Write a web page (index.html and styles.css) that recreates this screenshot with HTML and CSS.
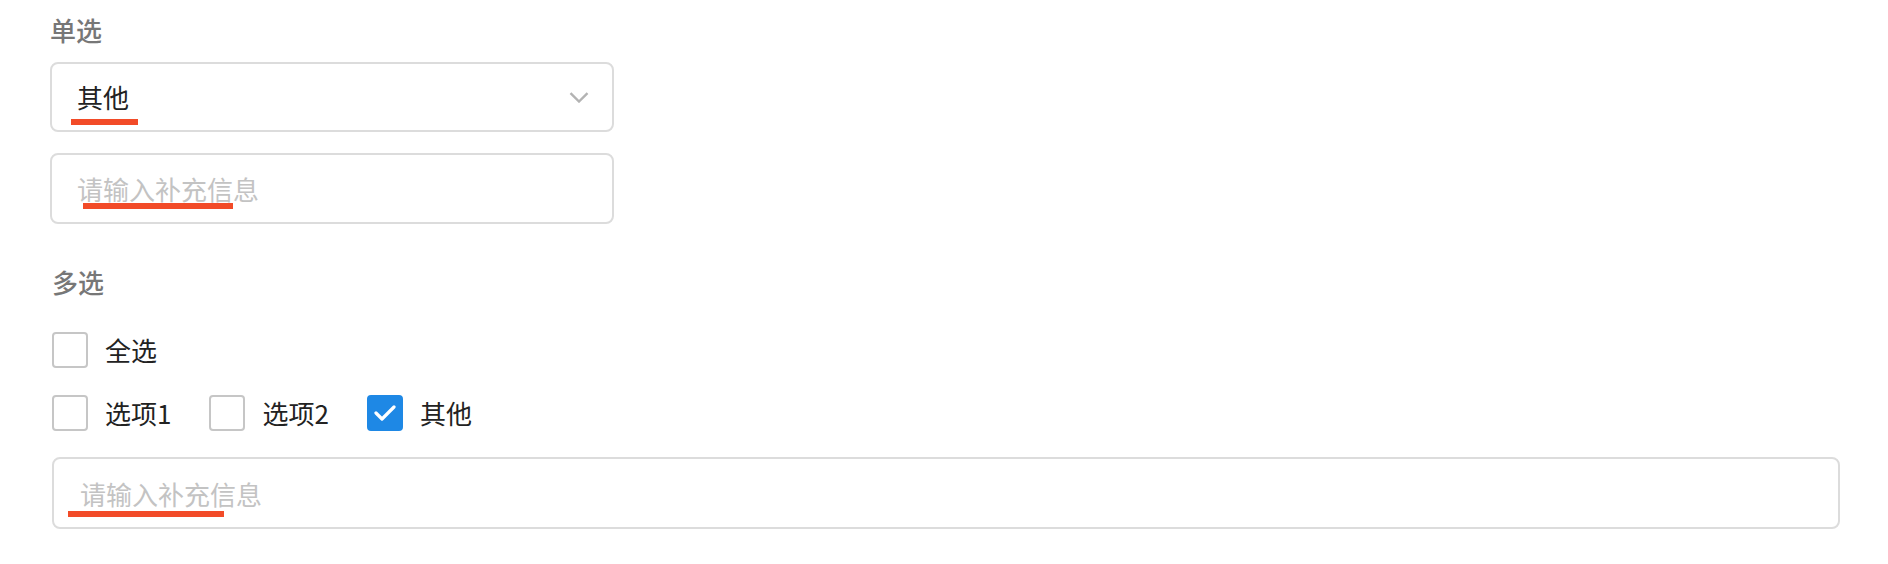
FILE: index.html
```html
<!DOCTYPE html>
<html lang="zh-CN">
<head>
  <meta charset="UTF-8">
  <title>单选 / 多选</title>
  <link rel="stylesheet" href="styles.css">
</head>
<body>
  <div class="page">
    <div class="section single">
      <div class="label">单选</div>
      <div class="field select">
        <span class="value">其他</span>
        <svg class="chevron" width="20" height="11" viewBox="0 0 20 11">
          <path d="M1.5 1.2 L10 9.5 L18.5 1.2" fill="none" stroke="#b3b3b3" stroke-width="2.4"/>
        </svg>
        <i class="mark mark-a"></i>
      </div>
      <div class="field">
        <input type="text" placeholder="请输入补充信息">
        <i class="mark mark-b"></i>
      </div>
    </div>

    <div class="section multi">
      <div class="label">多选</div>
      <div class="row">
        <label class="check"><span class="box"></span>全选</label>
      </div>
      <div class="row">
        <label class="check"><span class="box"></span>选项1</label>
        <label class="check"><span class="box"></span>选项2</label>
        <label class="check"><span class="box on">
          <svg width="22" height="16" viewBox="0 0 22 16">
            <path d="M2 8 L8 14 L20 2" fill="none" stroke="#fff" stroke-width="3.2" stroke-linecap="round" stroke-linejoin="round"/>
          </svg>
        </span>其他</label>
      </div>
      <div class="field wide">
        <input type="text" placeholder="请输入补充信息">
        <i class="mark mark-c"></i>
      </div>
    </div>
  </div>
</body>
</html>
```

FILE: styles.css
```css
body {
  margin: 0;
  background: #fff;
  font-family: "Noto Sans CJK SC", "Noto Sans", sans-serif;
  color: #222;
}
.page {
  padding: 13px 48px 0 50px;
}
.label {
  font-size: 26px;
  line-height: 34px;
  font-weight: 500;
  color: #777;
}
.single {
  width: 564px;
}
.field {
  position: relative;
  box-sizing: border-box;
  height: 71px;
  border: 2px solid #dcdcdc;
  border-radius: 8px;
  margin-top: 21px;
  display: flex;
  align-items: center;
}
.select {
  height: 70px;
  margin-top: 15px;
  padding: 0 23px 0 25px;
  justify-content: space-between;
}
.value {
  font-size: 26px;
  line-height: 34px;
}
.field input {
  border: none;
  outline: none;
  background: transparent;
  width: 100%;
  padding: 0 25px;
  font-family: inherit;
  font-size: 26px;
  color: #222;
}
.field input::placeholder {
  color: #c3c3c3;
}
.mark {
  position: absolute;
  height: 6px;
  background: #f24b28;
}
.mark-a { left: 19px; top: 55px; width: 67px; }
.mark-b { left: 31px; top: 48px; width: 150px; }
.mark-c { left: 14px; top: 52px; width: 156px; }

.multi {
  margin-top: 41px;
  padding-left: 2px;
}
.row {
  display: flex;
  height: 36px;
  margin-top: 27px;
}
.multi .label + .row {
  margin-top: 33px;
}
.check {
  display: flex;
  align-items: center;
  gap: 17px;
  margin-right: 38px;
  font-size: 26px;
  line-height: 34px;
}
.box {
  box-sizing: border-box;
  width: 36px;
  height: 36px;
  border: 2px solid #c6c6c6;
  border-radius: 4px;
  display: flex;
  align-items: center;
  justify-content: center;
}
.box.on {
  background: #1e88e5;
  border-color: #1e88e5;
}
.wide {
  height: 72px;
  margin-top: 26px;
}
.wide input {
  padding-left: 26px;
}
```
